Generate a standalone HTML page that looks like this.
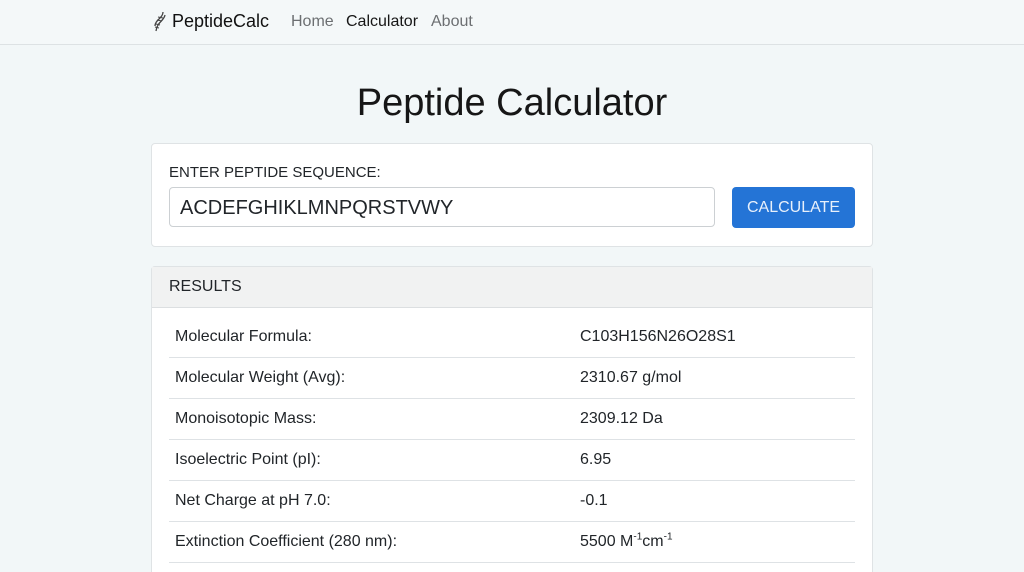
<!DOCTYPE html>
<html style="overflow:hidden;height:572px"><head><style>
body{margin:0;background:#f2f7f8;font-family:"Liberation Sans",sans-serif;color:#212529;width:1024px;height:572px;overflow:hidden;position:relative}
.nav{height:44px;border-bottom:1px solid #dde2e4;background:#f4f8f9;position:relative}
.brand{position:absolute;left:172px;top:11px;font-size:18px;color:#111}
.nav a{position:absolute;top:13px;font-size:16px;color:#6c6f72}
h1{position:absolute;top:82px;left:0;width:1024px;text-align:center;margin:0;font-weight:400;font-size:38px;color:#161616}
.card1{position:absolute;left:151px;top:143px;width:720px;height:102px;background:#fff;border:1px solid #dfe3e5;border-radius:4px}
.lbl{position:absolute;left:17px;top:20px;font-size:15px}
.inp{position:absolute;left:17px;top:43px;height:40px;border:1px solid #ccd0d3;border-radius:4px;font-size:20px;line-height:40px;padding-left:10px;box-sizing:border-box;width:546px}
.btn{position:absolute;left:580px;top:43px;width:123px;height:41px;background:#2474d6;border-radius:4px;color:#e8f0fb;font-size:16px;text-align:center;line-height:41px}
.card2{position:absolute;left:151px;top:266px;width:720px;height:310px;background:#fff;border:1px solid #dfe3e5;border-radius:4px}
.hd{height:40px;background:#f1f2f2;border-bottom:1px solid #dcdfe1;font-size:16px;line-height:40px;padding-left:17px}
.row{position:absolute;left:17px;width:686px;height:41px;border-bottom:1px solid #dee2e5;font-size:16px;line-height:41px}
.row span{position:absolute;left:6px}.row b{position:absolute;left:411px;font-weight:400}
sup{font-size:10px;line-height:0}
</style></head><body>
<div class="nav">
<svg style="position:absolute;left:150px;top:11px" width="18" height="22" viewBox="0 0 18 22" fill="none" stroke="#444" stroke-width="1.3"><path d="M13 1C13 7 5 9 5 15M15 4C14 10 7 11 6 20"/><path d="M8 6L13 7M7 9L12 10M6 13L10 14M5 16L9 17" stroke-width="1"/></svg>
<div class="brand">PeptideCalc</div>
<a style="left:291px">Home</a><a style="left:346px;color:#161616">Calculator</a><a style="left:431px">About</a>
</div>
<h1>Peptide Calculator</h1>
<div class="card1"><div class="lbl">ENTER PEPTIDE SEQUENCE:</div><div class="inp">ACDEFGHIKLMNPQRSTVWY</div><div class="btn">CALCULATE</div></div>
<div class="card2"><div class="hd">RESULTS</div>
<div class="row" style="top:49px"><span>Molecular Formula:</span><b>C103H156N26O28S1</b></div>
<div class="row" style="top:90px"><span>Molecular Weight (Avg):</span><b>2310.67 g/mol</b></div>
<div class="row" style="top:131px"><span>Monoisotopic Mass:</span><b>2309.12 Da</b></div>
<div class="row" style="top:172px"><span>Isoelectric Point (pI):</span><b>6.95</b></div>
<div class="row" style="top:213px"><span>Net Charge at pH 7.0:</span><b>-0.1</b></div>
<div class="row" style="top:254px"><span>Extinction Coefficient (280 nm):</span><b>5500 M<sup>-1</sup>cm<sup>-1</sup></b></div>
</div>
</body></html>
